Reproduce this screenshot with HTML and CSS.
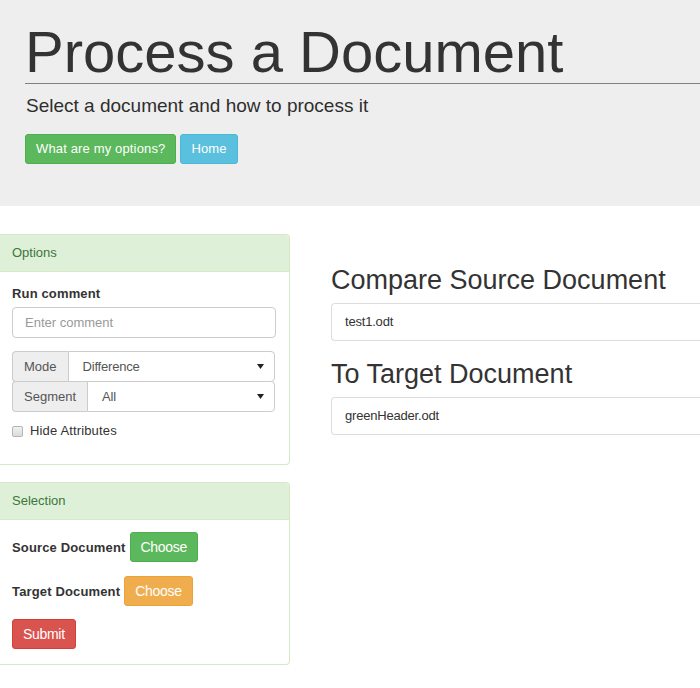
FILE: index.html
```html
<!DOCTYPE html>
<html>
<head>
<meta charset="utf-8">
<title>Process a Document</title>
<link rel="stylesheet" href="styles.css">
</head>
<body>
<div class="jumbotron">
  <h1>Process a Document</h1>
  <p class="lead">Select a document and how to process it</p>
  <div class="actions">
    <a class="btn btn-success">What are my options?</a>
    <a class="btn btn-info">Home</a>
  </div>
</div>
<div class="main">
  <div class="sidebar">
    <div class="panel">
      <div class="panel-heading">Options</div>
      <div class="panel-body">
        <label class="label-strong" for="comment">Run comment</label>
        <input id="comment" class="form-control" type="text" placeholder="Enter comment">
        <div class="input-group first">
          <span class="addon">Mode</span>
          <div class="select"><span>Difference</span><svg class="caret" width="7" height="5" viewBox="0 0 7 5"><path d="M0 0H7L3.5 5Z" fill="#222"/></svg></div>
        </div>
        <div class="input-group">
          <span class="addon">Segment</span>
          <div class="select"><span>All</span><svg class="caret" width="7" height="5" viewBox="0 0 7 5"><path d="M0 0H7L3.5 5Z" fill="#222"/></svg></div>
        </div>
        <div class="check-row">
          <span class="checkbox"></span>
          <span class="check-label">Hide Attributes</span>
        </div>
      </div>
    </div>
    <div class="panel panel-second">
      <div class="panel-heading">Selection</div>
      <div class="panel-body selection-body">
        <div class="doc-row">
          <span class="doc-label">Source Document</span>
          <a class="btn btn-md btn-success">Choose</a>
        </div>
        <div class="doc-row tight">
          <span class="doc-label">Target Document</span>
          <a class="btn btn-md btn-warning">Choose</a>
        </div>
        <div class="doc-row last">
          <a class="btn btn-md btn-danger">Submit</a>
        </div>
      </div>
    </div>
  </div>
  <div class="content">
    <h3 class="doc-title">Compare Source Document</h3>
    <div class="doc-box">test1.odt</div>
    <h3 class="doc-title second">To Target Document</h3>
    <div class="doc-box">greenHeader.odt</div>
  </div>
</div>
</body>
</html>
```
FILE: styles.css
```css
body {
  margin: 0;
  font-family: "Liberation Sans", Arial, sans-serif;
  font-size: 13px;
  line-height: 18px;
  color: #333;
  background: #fff;
}
.jumbotron {
  background: #eee;
  height: 206px;
  box-sizing: border-box;
  padding: 20px 0 0 25px;
}
.jumbotron h1 {
  margin: 0;
  font-size: 58px;
  font-weight: normal;
  line-height: 63px;
  border-bottom: 1px solid #808080;
}
.lead {
  margin: 8px 0 0 1px;
  font-size: 19px;
  line-height: 27px;
  color: #2e2e2e;
}
.actions {
  margin-top: 15px;
  display: flex;
  gap: 4px;
}
.btn {
  display: inline-block;
  padding: 5px 10px;
  font-size: 13px;
  line-height: 18px;
  letter-spacing: 0.15px;
  border: 1px solid transparent;
  border-radius: 3px;
  color: #fff;
  white-space: nowrap;
}
.btn-md {
  font-size: 14px;
  letter-spacing: -0.3px;
}
.btn-success {
  background: #5cb85c;
  border-color: #4cae4c;
}
.btn-info {
  background: #5bc0de;
  border-color: #46b8da;
}
.btn-warning {
  background: #f0ad4e;
  border-color: #eea236;
}
.btn-danger {
  background: #d9534f;
  border-color: #d43f3a;
}
.main {
  display: flex;
  align-items: flex-start;
  margin-top: 28px;
}
.sidebar {
  width: 290px;
  flex: none;
}
.panel {
  border: 1px solid #d6e9c6;
  border-left: 0;
  border-radius: 0 4px 4px 0;
  background: #fff;
}
.panel-second {
  margin-top: 17px;
}
.panel-heading {
  background: #dff0d8;
  color: #3c763d;
  padding: 9px 12px;
  border-bottom: 1px solid #d6e9c6;
  border-top-right-radius: 3px;
}
.panel-body {
  padding: 13px 13px 24px 12px;
}
.label-strong {
  display: block;
  font-weight: bold;
  letter-spacing: 0.15px;
  margin-bottom: 4px;
}
.form-control {
  display: block;
  width: 100%;
  height: 31px;
  box-sizing: border-box;
  margin: 0;
  border: 1px solid #ccc;
  border-radius: 4px;
  padding: 0 12px;
  font-family: inherit;
  font-size: 13px;
  color: #555;
  background: #fff;
  outline: none;
}
.form-control::placeholder {
  color: #999;
}
.input-group {
  display: flex;
  height: 31px;
  margin-top: -1px;
  margin-right: 1px;
}
.input-group.first {
  margin-top: 13px;
}
.addon {
  display: flex;
  align-items: center;
  background: #eee;
  border: 1px solid #ccc;
  border-right: 0;
  border-radius: 4px 0 0 4px;
  padding: 0 11px;
  color: #555;
}
.select {
  flex: 1;
  display: flex;
  align-items: center;
  justify-content: space-between;
  border: 1px solid #ccc;
  border-radius: 0 4px 4px 0;
  padding: 0 10px 0 14px;
  color: #555;
  background: #fff;
  letter-spacing: -0.2px;
}
.caret {
  display: block;
}
.check-row {
  display: flex;
  align-items: center;
  gap: 7px;
  margin-top: 10px;
}
.check-label {
  letter-spacing: 0.15px;
}
.checkbox {
  width: 9px;
  height: 9px;
  border: 1px solid #b5b5b5;
  border-radius: 2px;
  background: linear-gradient(#f0f0f0, #dcdcdc);
}
.selection-body {
  padding: 12px 13px 15px 12px;
}
.doc-row {
  display: flex;
  align-items: baseline;
  gap: 4px;
  margin-bottom: 14px;
}
.doc-row.tight {
  margin-bottom: 13px;
}
.doc-row.last {
  margin-bottom: 0;
}
.doc-label {
  font-weight: bold;
  letter-spacing: 0.15px;
}
.content {
  flex: 1;
  min-width: 0;
  margin-left: 41px;
  margin-top: 31px;
}
.doc-title {
  margin: 0 0 7px;
  font-size: 27px;
  line-height: 31px;
  font-weight: normal;
  white-space: nowrap;
}
.doc-title.second {
  margin-top: 18px;
}
.doc-box {
  border: 1px solid #ddd;
  border-right: 0;
  border-radius: 4px 0 0 4px;
  padding: 9px 13px;
  letter-spacing: -0.2px;
}
```
